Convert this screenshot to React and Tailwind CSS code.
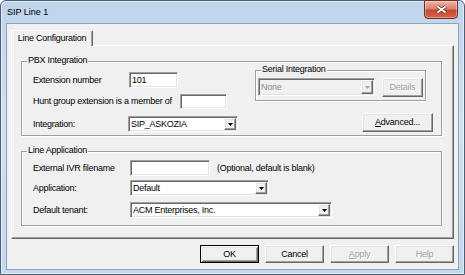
import React from 'react';

const raised =
  'border border-t-white border-l-white border-r-[#696969] border-b-[#696969] shadow-[inset_-1px_-1px_0_#a0a0a0,inset_1px_1px_0_#e3e3e3] bg-[#f0f0f0]';
const sunken =
  'border border-t-[#a0a0a0] border-l-[#a0a0a0] border-r-white border-b-white shadow-[inset_1px_1px_0_#696969,inset_-1px_-1px_0_#e3e3e3]';

function Button({ children, className = '', disabled, isDefault }) {
  const frame = isDefault
    ? 'border border-black bg-[#f0f0f0] shadow-[inset_1px_1px_0_#fff,inset_-1px_-1px_0_#696969,inset_2px_2px_0_#e3e3e3,inset_-2px_-2px_0_#a0a0a0]'
    : raised;
  return (
    <div
      className={`flex items-center justify-center ${frame} ${
        disabled ? 'text-[#a0a0a0] [text-shadow:1px_1px_0_#fff]' : 'text-black'
      } ${className}`}
    >
      {children}
    </div>
  );
}

function Edit({ value, className = '' }) {
  return (
    <div className={`flex items-center pl-[2px] bg-white ${sunken} ${className}`}>{value}</div>
  );
}

function Combo({ value, className = '', disabled }) {
  return (
    <div
      className={`flex items-stretch ${sunken} ${
        disabled ? 'bg-[#f0f0f0] text-[#8d8d8d]' : 'bg-white'
      } ${className}`}
    >
      <span className="flex-1 flex items-center pl-[2px] whitespace-nowrap overflow-hidden">
        {value}
      </span>
      <span className={`w-[12px] m-[1px] flex items-center justify-center ${raised}`}>
        <svg width="5" height="3" viewBox="0 0 5 3">
          <path d="M0 0h5L2.5 3z" fill={disabled ? '#a0a0a0' : '#000'} />
        </svg>
      </span>
    </div>
  );
}

function Group({ title, className = '', children }) {
  return (
    <div
      className={`relative border border-[#a0a0a0] shadow-[inset_1px_1px_0_#fff,1px_1px_0_#fff] ${className}`}
    >
      <span className="absolute left-[5px] -top-[7px] px-[1px] bg-[#f0f0f0] leading-[11px]">
        {title}
      </span>
      {children}
    </div>
  );
}

export default function App() {
  return (
    <div className="w-[465px] h-[275px] font-['Liberation_Sans',Arial,sans-serif] text-[9px] leading-[11px] tracking-[-0.25px] text-black">
      <div className="w-full h-full flex flex-col border border-[#4f5d70] rounded-t-[6px] bg-[linear-gradient(180deg,#bfd4ec_0%,#d2e1f2_45%,#c4d8ee_100%)] shadow-[inset_1px_1px_0_rgba(255,255,255,0.55),inset_-1px_-1px_0_rgba(255,255,255,0.55)]">
        {/* Title bar */}
        <div className="h-[22px] flex items-start">
          <span className="mt-[6px] ml-[6px] tracking-normal">SIP Line 1</span>
          <div className="ml-auto mr-[6px] -mt-[1px] w-[34px] h-[19px] flex items-center justify-center border border-[#6f2f25] rounded-b-[4px] bg-[linear-gradient(180deg,#ecb7aa_0%,#dd806a_45%,#c8472d_55%,#d6674d_100%)] shadow-[inset_0_0_0_1px_rgba(255,255,255,0.35)]">
            <svg width="11" height="9" viewBox="0 0 11 9">
              <path d="M1.5 1.5L9.5 7.5M9.5 1.5L1.5 7.5" stroke="#5a1e14" strokeWidth="3.4" />
              <path d="M1.5 1.5L9.5 7.5M9.5 1.5L1.5 7.5" stroke="#fff" strokeWidth="2" />
            </svg>
          </div>
        </div>

        {/* Client area */}
        <div className="mx-[5px] h-[247px] flex flex-col border border-[#8ea2ba] bg-[#f0f0f0]">
          {/* Tab */}
          <div className="relative z-10 ml-[4px] mt-[6px] -mb-[1px] w-[82px] h-[16px] flex items-center justify-center bg-[#f0f0f0] border-l border-t border-r border-l-white border-t-white border-r-[#696969] rounded-t-[2px] shadow-[inset_-1px_0_0_#a0a0a0]">
            Line Configuration
          </div>

          {/* Tab panel */}
          <div className="ml-[4px] w-[443px] h-[194px] flex flex-col border border-t-white border-l-white border-r-[#696969] border-b-[#696969] shadow-[inset_-1px_-1px_0_#a0a0a0]">
            <Group title="PBX Integration" className="ml-[9px] mt-[15px] w-[421px] h-[75px] flex">
              <div className="w-[233px] pl-[11px] pt-[10px] flex flex-col">
                <div className="h-[16px] flex items-center">
                  <span className="w-[96px]">Extension number</span>
                  <Edit value="101" className="w-[49px] h-[16px]" />
                </div>
                <div className="mt-[6px] h-[15px] flex items-center">
                  <span className="w-[147px]">Hunt group extension is a member of</span>
                  <Edit value="" className="w-[47px] h-[15px]" />
                </div>
                <div className="mt-[7px] h-[16px] flex items-center">
                  <span className="w-[95px]">Integration:</span>
                  <Combo value="SIP_ASKOZIA" className="w-[110px] h-[16px]" />
                </div>
              </div>
              <div className="w-[178px] pt-[8px] flex flex-col">
                <Group title="Serial Integration" className="w-[171px] h-[31px] flex items-start pl-[2px] pt-[7px]">
                  <Combo value="None" disabled className="w-[117px] h-[18px]" />
                  <Button disabled className="ml-[7px] w-[41px] h-[19px]">
                    Details
                  </Button>
                </Group>
                <Button className="mt-[12px] self-end w-[71px] h-[19px]">
                  <span>
                    <u>A</u>dvanced...
                  </span>
                </Button>
              </div>
            </Group>

            <Group title="Line Application" className="ml-[9px] mt-[15px] w-[421px] h-[75px] pl-[11px] pt-[8px] flex flex-col">
              <div className="h-[16px] flex items-center">
                <span className="w-[97px]">External IVR filename</span>
                <Edit value="" className="w-[80px] h-[16px]" />
                <span className="ml-[7px]">(Optional, default is blank)</span>
              </div>
              <div className="mt-[4px] h-[16px] flex items-center">
                <span className="w-[97px]">Application:</span>
                <Combo value="Default" className="w-[139px] h-[16px]" />
              </div>
              <div className="mt-[6px] h-[16px] flex items-center">
                <span className="w-[97px]">Default tenant:</span>
                <Combo value="ACM Enterprises, Inc." className="w-[202px] h-[16px]" />
              </div>
            </Group>
          </div>

          {/* Dialog buttons */}
          <div className="mt-[6px] mr-[4px] flex justify-end gap-[6px]">
            <Button isDefault className="w-[59px] h-[18px]">OK</Button>
            <Button className="w-[59px] h-[18px]">Cancel</Button>
            <Button disabled className="w-[59px] h-[18px]">
              <span>
                <u>A</u>pply
              </span>
            </Button>
            <Button disabled className="w-[59px] h-[18px]">Help</Button>
          </div>
        </div>
      </div>
    </div>
  );
}
